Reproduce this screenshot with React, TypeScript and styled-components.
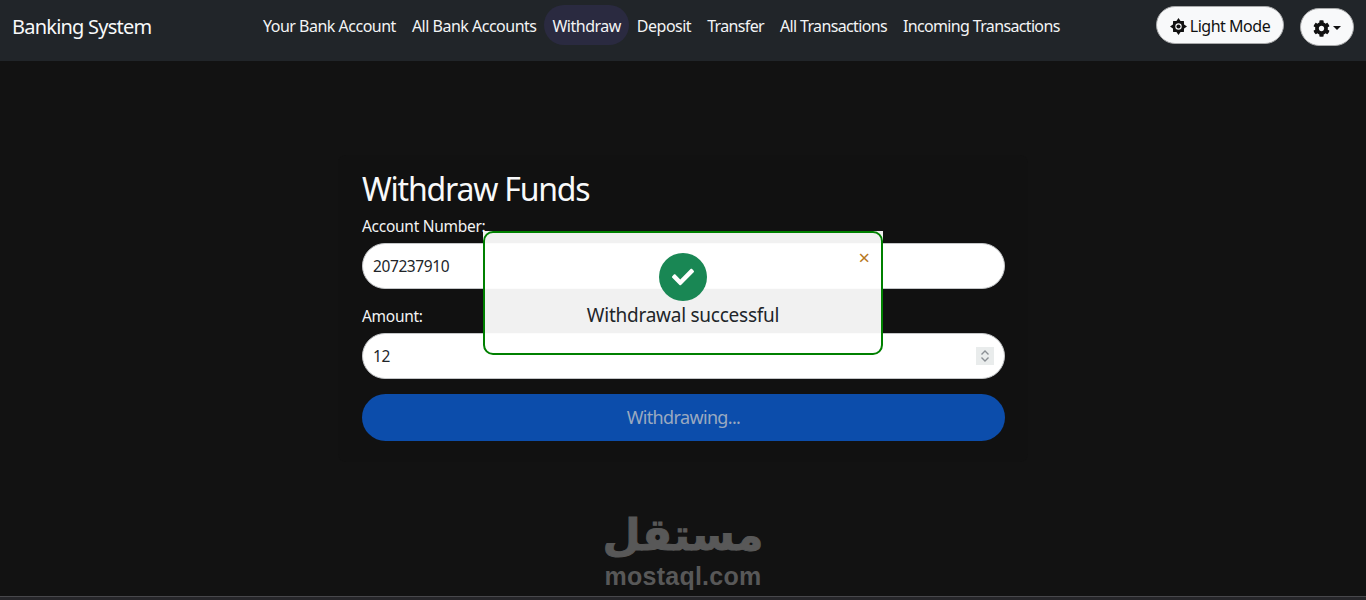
import type { FC } from 'react';
import styled, { createGlobalStyle } from 'styled-components';
import { FaCog, FaCheck } from 'react-icons/fa';

const GlobalStyle = createGlobalStyle`
    html, body {
        margin: 0;
        height: 600px;
        overflow: hidden;
        background: #121212;
        font-family: "Noto Sans", "Open Sans", sans-serif;
    }
`;

const Page = styled.div`
    position: relative;
    height: 600px;
    overflow: hidden;
    background: #121212;
`;

const Navbar = styled.nav`
    display: flex;
    align-items: flex-start;
    height: 61px;
    background: #212529;
    box-sizing: border-box;
`;

const Brand = styled.a`
    width: 243px;
    padding: 13px 0 0 12px;
    font-size: 20px;
    line-height: 28px;
    letter-spacing: -0.78px;
    color: #f8f9fa;
`;

const NavLinks = styled.div`
    display: flex;
    flex-grow: 1;
    padding-top: 5px;
`;

const NavLink = styled.a<{ $active?: boolean; $tight?: boolean }>`
    height: 40px;
    padding: 0 8px;
    border-radius: 20px;
    font-size: 16px;
    line-height: 43px;
    letter-spacing: ${({ $tight }) => ($tight ? '-0.65px' : '-0.5px')};
    color: #f3f4f5;
    background: ${({ $active }) => ($active ? '#2a2a40' : 'transparent')};
`;

const NavActions = styled.div`
    display: flex;
    align-items: flex-start;
    gap: 16px;
    padding: 6px 12px 0 0;
`;

const PillButton = styled.button`
    display: flex;
    align-items: center;
    justify-content: center;
    gap: 3px;
    height: 38px;
    padding: 2px 0 0;
    border: 1px solid #a8a9aa;
    border-radius: 19px;
    background: #f8f9fa;
    font-family: inherit;
    font-size: 16px;
    letter-spacing: -0.48px;
    color: #111;
`;

const ThemeButton = styled(PillButton)`
    width: 128px;
`;

const SettingsButton = styled(PillButton)`
    width: 54px;
    margin-top: 2px;
`;

const Caret = styled.span`
    width: 0;
    height: 0;
    border-top: 4px solid #111;
    border-left: 4px solid transparent;
    border-right: 4px solid transparent;
`;

const Main = styled.main`
    display: flex;
    justify-content: center;
    padding-top: 94px;
`;

const Card = styled.section`
    width: 690px;
    height: 307px;
    box-sizing: border-box;
    padding: 14px 23px 0 24px;
    border-radius: 8px;
    background: #111111;
    box-shadow: 0 0 4px rgba(255, 255, 255, 0.015);
`;

const Title = styled.h2`
    margin: 0 0 5px;
    font-size: 32px;
    font-weight: 400;
    line-height: 40px;
    letter-spacing: -1.2px;
    color: #f8f9fa;
`;

const Label = styled.label`
    display: block;
    margin-bottom: 5px;
    font-size: 15.5px;
    line-height: 24px;
    letter-spacing: -0.28px;
    color: #f3f4f5;
`;

const Field = styled.div`
    position: relative;
    margin-bottom: 15px;
`;

const Input = styled.input`
    display: block;
    width: 100%;
    height: 46px;
    box-sizing: border-box;
    padding: 0 10px;
    border: 1px solid #c4c6c8;
    border-radius: 23px;
    background: #fff;
    font-family: inherit;
    font-size: 15.5px;
    letter-spacing: -0.4px;
    color: #212529;
    -moz-appearance: textfield;

    &::-webkit-inner-spin-button,
    &::-webkit-outer-spin-button {
        -webkit-appearance: none;
        margin: 0;
    }
`;

const Spinner = styled.svg`
    position: absolute;
    top: 14px;
    right: 11px;
    width: 18px;
    height: 18px;
    background: #e9ecec;
`;

const SubmitButton = styled.button`
    display: block;
    width: 100%;
    height: 47px;
    padding: 0 0 2px;
    border: 0;
    border-radius: 24px;
    background: #0c4dab;
    font-family: inherit;
    font-size: 18px;
    letter-spacing: -0.65px;
    color: #9aa9c0;
`;

const Popup = styled.div`
    position: absolute;
    top: 231px;
    left: 483px;
    width: 400px;
    height: 124px;
    background: rgba(255, 255, 255, 0.94);
`;

const PopupBody = styled.div`
    position: relative;
    height: 100%;
    box-sizing: border-box;
    display: flex;
    flex-direction: column;
    align-items: center;
    padding-top: 20px;
    border: 2px solid #008000;
    border-radius: 10px;
`;

const SuccessIcon = styled.div`
    display: flex;
    align-items: center;
    justify-content: center;
    width: 48px;
    height: 48px;
    border-radius: 50%;
    background: #198754;
    color: #fff;
    font-size: 22px;
`;

const Message = styled.p`
    margin: 0;
    font-size: 19px;
    line-height: 28px;
    letter-spacing: -0.25px;
    color: #212529;
`;

const CloseButton = styled.span`
    position: absolute;
    top: 15px;
    right: 11px;
    font-size: 20px;
    line-height: 20px;
    color: #b8791f;
`;

const Watermark = styled.div`
    position: absolute;
    left: 0;
    right: 0;
    top: 506px;
    display: flex;
    flex-direction: column;
    align-items: center;
    color: #585858;
    pointer-events: none;
`;

const WatermarkArabic = styled.span`
    font-family: "DejaVu Sans", sans-serif;
    font-size: 44px;
    font-weight: 700;
    line-height: 58px;
    -webkit-text-stroke: 1px #585858;
`;

const WatermarkLatin = styled.span`
    font-family: "Liberation Sans", sans-serif;
    font-size: 25px;
    font-weight: 700;
    line-height: 24px;
    letter-spacing: 0.25px;
`;

const BottomEdge = styled.div`
    position: absolute;
    left: 0;
    right: 0;
    bottom: 0;
    height: 4px;
    box-sizing: border-box;
    border-top: 1px solid #48484c;
    background: #26262a;
`;

const links = [
    'Your Bank Account',
    'All Bank Accounts',
    'Withdraw',
    'Deposit',
    'Transfer',
    'All Transactions',
    'Incoming Transactions',
];

// solid eight point sun with a round hole, the package one is too thin at this size
const SunIcon: FC = () => (
    <svg width="17" height="17" viewBox="0 0 18 18">
        <path
            fill="#111"
            fillRule="evenodd"
            d="M9 0l2.2 3.1L14.7 3.3l.2 3.5L18 9l-3.1 2.2-.2 3.5-3.5.2L9 18l-2.2-3.1-3.5-.2-.2-3.5L0 9l3.1-2.2.2-3.5 3.5-.2zM9 5.6a3.4 3.4 0 1 0 0 6.8 3.4 3.4 0 0 0 0-6.8z"
        />
        <circle cx="9" cy="9" r="2.2" fill="#111" />
    </svg>
);

const App: FC = () => (
    <Page>
        <GlobalStyle />
        <Navbar>
            <Brand>Banking System</Brand>
            <NavLinks>
                {links.map((link, i) => (
                    <NavLink key={link} $active={link === 'Withdraw'} $tight={i > 3}>
                        {link}
                    </NavLink>
                ))}
            </NavLinks>
            <NavActions>
                <ThemeButton>
                    <SunIcon />
                    Light Mode
                </ThemeButton>
                <SettingsButton>
                    <FaCog size={17} />
                    <Caret />
                </SettingsButton>
            </NavActions>
        </Navbar>
        <Main>
            <Card>
                <Title>Withdraw Funds</Title>
                <Label>Account Number:</Label>
                <Field>
                    <Input type="text" defaultValue="207237910" />
                </Field>
                <Label>Amount:</Label>
                <Field>
                    <Input type="number" defaultValue="12" />
                    <Spinner viewBox="0 0 18 18" fill="none" stroke="#8a8f94" strokeWidth="1.4">
                        <path d="M5.5 7.5 9 4l3.5 3.5M5.5 10.5 9 14l3.5-3.5" />
                    </Spinner>
                </Field>
                <SubmitButton disabled>Withdrawing...</SubmitButton>
            </Card>
        </Main>
        <Popup>
            <PopupBody>
                <CloseButton>×</CloseButton>
                <SuccessIcon>
                    <FaCheck />
                </SuccessIcon>
                <Message>Withdrawal successful</Message>
            </PopupBody>
        </Popup>
        <Watermark>
            <WatermarkArabic>مستقل</WatermarkArabic>
            <WatermarkLatin>mostaql.com</WatermarkLatin>
        </Watermark>
        <BottomEdge />
    </Page>
);

export default App;
